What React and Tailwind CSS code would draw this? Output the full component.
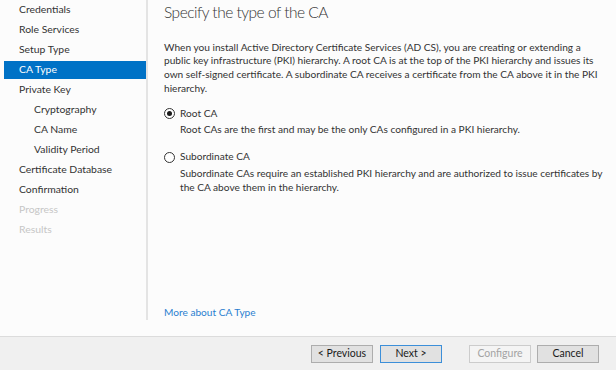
const steps = [
  { label: 'Credentials' },
  { label: 'Role Services' },
  { label: 'Setup Type' },
  { label: 'CA Type', active: true },
  { label: 'Private Key' },
  { label: 'Cryptography', sub: true },
  { label: 'CA Name', sub: true },
  { label: 'Validity Period', sub: true },
  { label: 'Certificate Database' },
  { label: 'Confirmation' },
  { label: 'Progress', disabled: true },
  { label: 'Results', disabled: true },
]

const Radio = ({ checked }) => (
  <span className="w-[11px] h-[11px] rounded-full border border-[#333333] bg-white flex items-center justify-center shrink-0">
    {checked && <span className="w-[5px] h-[5px] rounded-full bg-[#1a1a1a]" />}
  </span>
)

const Button = ({ children, variant }) => {
  const styles = {
    default: 'border-[#adadad] bg-[#e1e1e1] text-[#1a1a1a]',
    focused: 'border-[#3c8fd9] bg-[#e1e1e1] text-[#1a1a1a]',
    disabled: 'border-[#cccccc] bg-[#f4f4f4] text-[#a3a3a3]',
  }
  return (
    <button
      className={`w-[62px] h-[18px] border text-[10.5px] leading-none flex items-center justify-center ${styles[variant || 'default']}`}
    >
      {children}
    </button>
  )
}

export default function App() {
  return (
    <div
      className="w-[616px] h-[370px] flex flex-col bg-[#fcfcfc] text-[#333333] overflow-hidden"
      style={{ fontFamily: 'Lato, "Noto Sans", sans-serif' }}
    >
      <div className="flex-1 flex">
        {/* wizard steps */}
        <ul className="w-[146px] pl-[4px] flex flex-col">
          {steps.map((s) => (
            <li
              key={s.label}
              className={`h-[18px] my-px flex items-center text-[10.4px] ${s.sub ? 'pl-[30px]' : 'pl-[15px]'} ${
                s.active ? 'bg-[#0072c6] text-white' : s.disabled ? 'text-[#c6c6c6]' : 'text-[#333333]'
              }`}
            >
              {s.label}
            </li>
          ))}
        </ul>
        <div className="w-[2px] h-[320px] bg-[#e4e4e4]" />

        {/* page content */}
        <div className="flex-1 flex flex-col pl-[16px] pr-[8px]">
          <h1 className="text-[15.5px] font-light tracking-[-0.5px] text-[#333333] leading-none mt-[5px]">
            Specify the type of the CA
          </h1>
          <p className="text-[10.15px] leading-[13.7px] mt-[20px] max-w-[444px]">
            When you install Active Directory Certificate Services (AD CS), you are creating or extending a public key
            infrastructure (PKI) hierarchy. A root CA is at the top of the PKI hierarchy and issues its own self-signed
            certificate. A subordinate CA receives a certificate from the CA above it in the PKI hierarchy.
          </p>

          <div className="mt-[11px] flex flex-col">
            <label className="flex items-center gap-[5px] text-[10.15px] h-[14px]">
              <Radio checked />
              Root CA
            </label>
            <p className="text-[10.15px] leading-[13.7px] pl-[16px] mt-[3px]">
              Root CAs are the first and may be the only CAs configured in a PKI hierarchy.
            </p>

            <label className="flex items-center gap-[5px] text-[10.15px] h-[14px] mt-[13px]">
              <Radio />
              Subordinate CA
            </label>
            <p className="text-[10.15px] leading-[13.7px] pl-[16px] mt-[3px] max-w-[444px]">
              Subordinate CAs require an established PKI hierarchy and are authorized to issue certificates by the CA
              above them in the hierarchy.
            </p>
          </div>

          <a className="mt-auto mb-[16px] text-[10.15px] text-[#2b7fd0] cursor-pointer">More about CA Type</a>
        </div>
      </div>

      {/* footer buttons */}
      <div className="h-[34px] border-t border-[#dcdcdc] bg-[#f0f0f0] flex items-center justify-end pr-[17px]">
        <div className="flex items-center gap-[7px]">
          <Button>&lt; Previous</Button>
          <Button variant="focused">Next &gt;</Button>
        </div>
        <div className="flex items-center gap-[6px] ml-[27px]">
          <Button variant="disabled">Configure</Button>
          <Button>Cancel</Button>
        </div>
      </div>
    </div>
  )
}
